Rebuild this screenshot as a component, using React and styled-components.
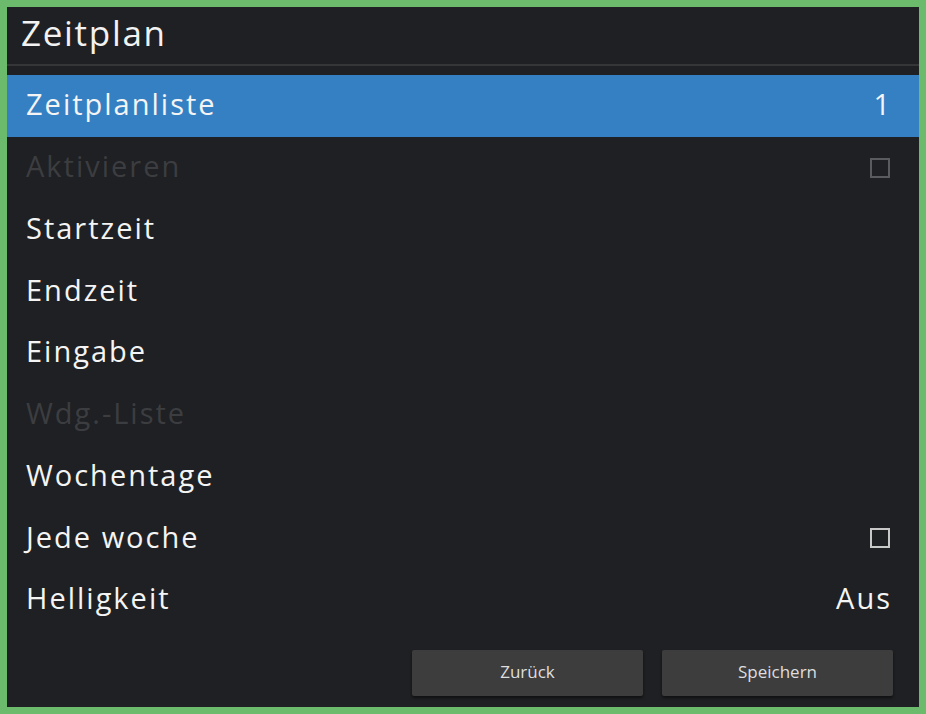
import React from "react";
import styled, { createGlobalStyle } from "styled-components";

const Global = createGlobalStyle`
  html, body { margin: 0; padding: 0; background: #6cbb6c; }
  body { font-family: "Open Sans", sans-serif; }
`;

const Frame = styled.div`
  width: 926px;
  height: 714px;
  box-sizing: border-box;
  padding: 7px;
  background: #6cbb6c;
`;

const Panel = styled.div`
  width: 912px;
  height: 700px;
  background: #1f2023;
  display: flex;
  flex-direction: column;
`;

const Header = styled.div`
  height: 59px;
  box-sizing: border-box;
  display: flex;
  align-items: center;
  padding: 0 0 7px 14px;
  border-bottom: 2px solid #353638;
  color: #f2f2f2;
  font-size: 35px;
  letter-spacing: 1.7px;
`;

const List = styled.div`
  margin-top: 9px;
  display: flex;
  flex-direction: column;
`;

const Row = styled.div`
  height: 61.75px;
  box-sizing: border-box;
  display: flex;
  align-items: center;
  justify-content: space-between;
  padding: 0 29px 4px 19px;
  font-size: 29px;
  letter-spacing: 2px;
  background: ${(p) => (p.$selected ? "#3580c3" : "transparent")};
  color: ${(p) => (p.$disabled ? "#3c3d40" : "#f4f4f4")};
`;

const Value = styled.span`
  color: inherit;
  margin-right: -2px;
`;

const Box = styled.span`
  width: 16px;
  height: 16px;
  margin-top: 4px;
  border: 2px solid ${(p) => (p.$disabled ? "#5a5b5e" : "#c8c8c8")};
`;

const Footer = styled.div`
  margin-top: auto;
  display: flex;
  justify-content: flex-end;
  gap: 19px;
  padding: 0 26px 11px 0;
`;

const Button = styled.button`
  width: 231px;
  height: 46px;
  border: none;
  border-radius: 2px;
  background: #3d3d3e;
  color: #dedede;
  font-family: "Open Sans", sans-serif;
  font-size: 17px;
  box-shadow: 0 2px 3px rgba(0, 0, 0, 0.5);
  padding: 0 0 3px;
`;

const rows = [
  { label: "Zeitplanliste", value: "1", selected: true },
  { label: "Aktivieren", box: true, disabled: true },
  { label: "Startzeit" },
  { label: "Endzeit" },
  { label: "Eingabe" },
  { label: "Wdg.-Liste", disabled: true },
  { label: "Wochentage" },
  { label: "Jede woche", box: true },
  { label: "Helligkeit", value: "Aus" },
];

export default function App() {
  return (
    <>
      <Global />
      <Frame>
        <Panel>
          <Header>Zeitplan</Header>
          <List>
            {rows.map((r) => (
              <Row key={r.label} $selected={r.selected} $disabled={r.disabled}>
                <span>{r.label}</span>
                {r.value && <Value>{r.value}</Value>}
                {r.box && <Box $disabled={r.disabled} />}
              </Row>
            ))}
          </List>
          <Footer>
            <Button>Zurück</Button>
            <Button>Speichern</Button>
          </Footer>
        </Panel>
      </Frame>
    </>
  );
}
